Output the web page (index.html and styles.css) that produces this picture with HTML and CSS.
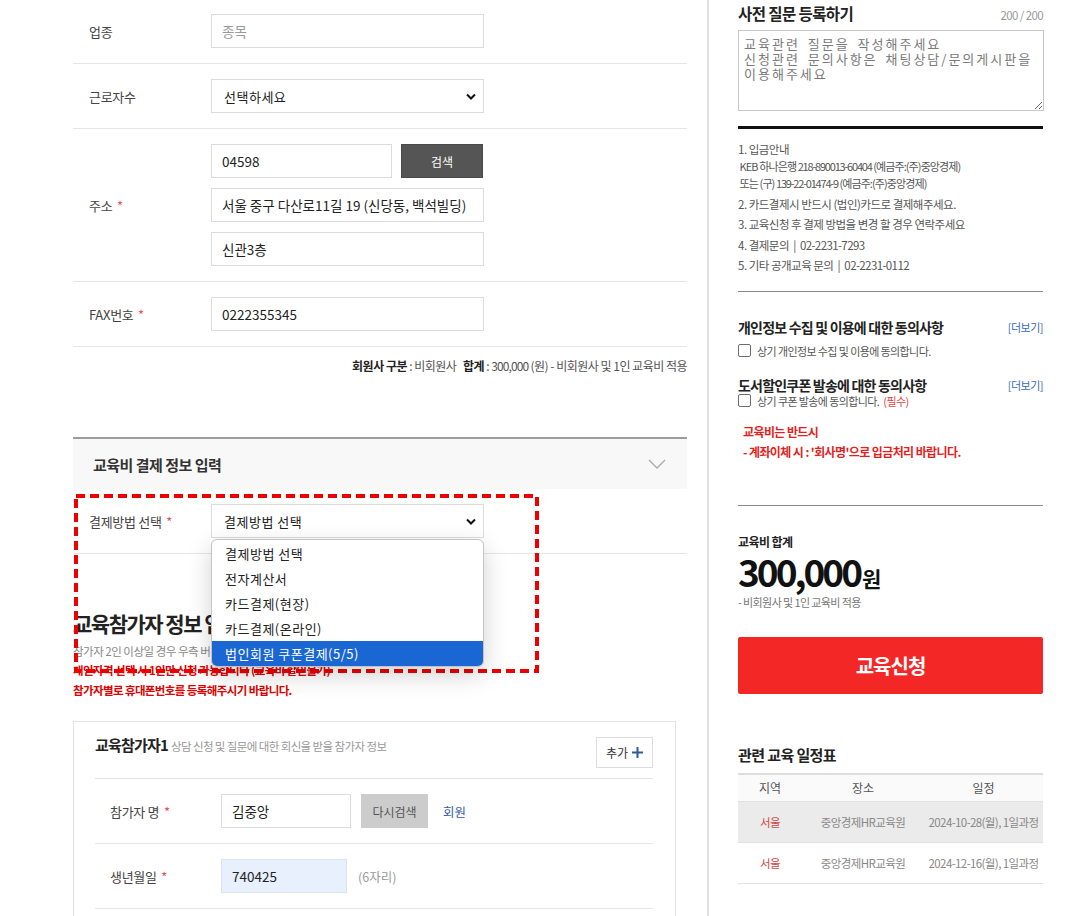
FILE: index.html
```html
<html>
<head>
  <meta charset="utf-8">
  <meta name="viewport" content="width=device-width, initial-scale=1.0">
<link rel="stylesheet" href="styles.css">
</head>
<body>

<div class="page">

  <!-- left: application form -->
  <div class="main">

    <div class="form-row">
      <span class="form-label">업종</span>
      <input type="text" class="inp" placeholder="종목">
    </div>

    <div class="form-row">
      <span class="form-label">근로자수</span>
      <div class="select-box">
        <select class="sel"><option>선택하세요</option></select>
        <svg class="sel-arrow" width="10" height="7" viewBox="0 0 10 7"><path d="M1 1.5 L5 5.5 L9 1.5" fill="none" stroke="#111" stroke-width="2"/></svg>
      </div>
    </div>

    <div class="form-row">
      <span class="form-label">주소 <em class="req">*</em></span>
      <div class="field-stack">
        <div class="zip-line">
          <input type="text" class="inp inp-zip" value="04598">
          <button class="btn-dark">검색</button>
        </div>
        <input type="text" class="inp" value="서울 중구 다산로11길 19 (신당동, 백석빌딩)">
        <input type="text" class="inp" value="신관3층">
      </div>
    </div>

    <div class="form-row">
      <span class="form-label">FAX번호 <em class="req">*</em></span>
      <input type="text" class="inp" value="0222355345">
    </div>

    <p class="sum-line"><b>회원사 구분</b> : 비회원사 &nbsp; <b>합계</b> : <span class="num">300,000</span> (원) - 비회원사 및 1인 교육비 적용</p>

    <div class="section-head">
      <span>교육비 결제 정보 입력</span>
      <svg width="18" height="10" viewBox="0 0 18 10"><path d="M1 1 L9 9 L17 1" fill="none" stroke="#aaa" stroke-width="1.3"/></svg>
    </div>

    <div class="pay-area">
      <div class="form-row">
        <span class="form-label">결제방법 선택 <em class="req">*</em></span>
        <div class="select-box">
          <select class="sel"><option>결제방법 선택</option></select>
          <svg class="sel-arrow" width="10" height="7" viewBox="0 0 10 7"><path d="M1 1.5 L5 5.5 L9 1.5" fill="none" stroke="#111" stroke-width="2"/></svg>
          <ul class="drop-list">
            <li>결제방법 선택</li>
            <li>전자계산서</li>
            <li>카드결제(현장)</li>
            <li>카드결제(온라인)</li>
            <li class="on">법인회원 쿠폰결제(5/5)</li>
          </ul>
        </div>
      </div>

      <h2 class="part-title">교육참가자 정보 입력</h2>
      <p class="part-note">참가자 2인 이상일 경우 우측 버튼을 클릭하여 추가해주세요.</p>
      <p class="part-warn">개인자격 선택 시 1인만 신청 가능합니다 (교육비 할인불가)</p>
      <p class="part-warn">참가자별로 휴대폰번호를 등록해주시기 바랍니다.</p>

      <svg class="dash-box" width="465" height="179" viewBox="0 0 465 179">
        <rect x="2" y="2" width="461" height="175" fill="none" stroke="#ee0000" stroke-width="4" stroke-dasharray="9 5"/>
      </svg>
    </div>

    <div class="card">
      <div class="card-head">
        <p><b>교육참가자1</b> <span>상담 신청 및 질문에 대한 회신을 받을 참가자 정보</span></p>
        <button class="btn-add">추가
          <svg width="11" height="11" viewBox="0 0 11 11"><path d="M5.5 0 V11 M0 5.5 H11" stroke="#2c5aa0" stroke-width="2"/></svg>
        </button>
      </div>
      <div class="form-row card-row">
        <span class="form-label">참가자 명 <em class="req">*</em></span>
        <input type="text" class="inp inp-name" value="김중앙">
        <button class="btn-gray">다시검색</button>
        <span class="member-link">회원</span>
      </div>
      <div class="form-row card-row">
        <span class="form-label">생년월일 <em class="req">*</em></span>
        <input type="text" class="inp inp-birth" value="740425">
        <span class="hint">(6자리)</span>
      </div>
    </div>

  </div>

  <!-- right: summary panel -->
  <div class="side">
    <div class="q-head">
      <h3>사전 질문 등록하기</h3>
      <span class="q-count">200 / 200</span>
    </div>
    <textarea class="q-text" placeholder="교육관련 질문을 작성해주세요&#10;신청관련 문의사항은 채팅상담/문의게시판을&#10;이용해주세요"></textarea>

    <ul class="info-list">
      <li>1. 입금안내<br>
        <span class="acct">&nbsp;KEB 하나은행 <span class="num">218-890013-60404</span> (예금주:(주)중앙경제)</span><br>
        <span class="acct">&nbsp;또는 (구) <span class="num">139-22-01474-9</span> (예금주:(주)중앙경제)</span></li>
      <li>2. 카드결제시 반드시 (법인)카드로 결제해주세요.</li>
      <li>3. 교육신청 후 결제 방법을 변경 할 경우 연락주세요</li>
      <li>4. 결제문의 &nbsp;|&nbsp; <span class="num">02-2231-7293</span></li>
      <li>5. 기타 공개교육 문의 &nbsp;|&nbsp; <span class="num">02-2231-0112</span></li>
    </ul>

    <div class="agree">
      <div class="agree-head">
        <h4>개인정보 수집 및 이용에 대한 동의사항</h4>
        <span class="more">[더보기]</span>
      </div>
      <label class="check-row"><input type="checkbox"> 상기 개인정보 수집 및 이용에 동의합니다.</label>

      <div class="agree-head second">
        <h4>도서할인쿠폰 발송에 대한 동의사항</h4>
        <span class="more">[더보기]</span>
      </div>
      <label class="check-row tight"><input type="checkbox"> 상기 쿠폰 발송에 동의합니다. <span class="red">(필수)</span></label>

      <p class="notice">교육비는 반드시<br>- 계좌이체 시 : '회사명'으로 입금처리 바랍니다.</p>
    </div>

    <div class="total">
      <p class="total-label">교육비 합계</p>
      <p class="total-price">300,000<small>원</small></p>
      <p class="total-note">- 비회원사 및 1인 교육비 적용</p>
      <button class="btn-apply">교육신청</button>
    </div>

    <h3 class="sch-title">관련 교육 일정표</h3>
    <table class="sch">
      <tr><th class="c1">지역</th><th class="c2">장소</th><th>일정</th></tr>
      <tr class="hl"><td class="area">서울</td><td>중앙경제HR교육원</td><td>2024-10-28(월), 1일과정</td></tr>
      <tr><td class="area">서울</td><td>중앙경제HR교육원</td><td>2024-12-16(월), 1일과정</td></tr>
    </table>
  </div>

</div>

</body>
</html>
```

FILE: styles.css
```css
html, body {
  margin: 0;
  overflow: hidden;
  background: #fff;
}
body {
  font-family: "Noto Sans CJK KR", "Noto Sans", sans-serif;
  font-size: 13px;
  color: #333;
}
p, h2, h3, h4, ul {
  margin: 0;
  padding: 0;
}
ul {
  list-style: none;
}

.page {
  display: flex;
  margin-top: -1px;
}

/* ---- left column ---- */
.main {
  width: 614px;
  margin-left: 73px;
}
.form-row {
  display: flex;
  align-items: center;
  padding: 15px 0;
  border-bottom: 1px solid #e6e6e6;
}
.form-label {
  width: 122px;
  padding-left: 16px;
  font-size: 13px;
  color: #444;
  letter-spacing: -0.3px;
  flex-shrink: 0;
}
.req {
  font-style: normal;
  color: #e05555;
  margin-left: 2px;
}
.inp {
  width: 273px;
  height: 34px;
  box-sizing: border-box;
  border: 1px solid #dcdcdc;
  padding: 0 10px;
  font-family: inherit;
  font-size: 13.5px;
  color: #222;
  outline: none;
}
.inp::placeholder {
  color: #999;
}
.field-stack {
  display: flex;
  flex-direction: column;
  gap: 10px;
}
.zip-line {
  display: flex;
}
.inp-zip {
  width: 181px;
}
.btn-dark {
  width: 82px;
  height: 34px;
  margin-left: 9px;
  background: #555;
  border: 1px solid #4a4a4a;
  color: #fff;
  font-family: inherit;
  font-size: 12px;
}

.select-box {
  position: relative;
  width: 273px;
}
.sel {
  appearance: none;
  width: 273px;
  height: 34px;
  border: 1px solid #dcdcdc;
  background: #fff;
  padding: 0 12px;
  font-family: inherit;
  font-size: 13px;
  color: #222;
  letter-spacing: 0.5px;
}
.sel-arrow {
  position: absolute;
  right: 8px;
  top: 14px;
}

.sum-line {
  margin: 10px 0 62px;
  text-align: right;
  font-size: 12px;
  line-height: 18px;
  color: #555;
  letter-spacing: -0.5px;
}
.sum-line b {
  color: #222;
}
.num {
  letter-spacing: -0.9px;
}

.section-head {
  display: flex;
  justify-content: space-between;
  align-items: center;
  height: 50px;
  padding: 0 21px 0 20px;
  border-top: 2px solid #9c9c9c;
  background: #f8f8f8;
  font-size: 15px;
  font-weight: bold;
  color: #333;
  letter-spacing: -0.5px;
}

.pay-area {
  position: relative;
}
.drop-list {
  position: absolute;
  left: 0;
  top: 35px;
  width: 273px;
  box-sizing: border-box;
  padding-top: 1px;
  background: #fff;
  border: 1px solid #c4c4c4;
  border-radius: 6px;
  overflow: hidden;
  box-shadow: 0 8px 24px rgba(0, 0, 0, 0.18);
  z-index: 3;
}
.drop-list li {
  height: 25px;
  line-height: 25px;
  padding-left: 13px;
  font-size: 13px;
  color: #222;
  letter-spacing: 0.5px;
}
.drop-list li.on {
  background: #1a66d2;
  color: #fff;
}
.dash-box {
  position: absolute;
  left: 1px;
  top: 5px;
  z-index: 2;
}

.part-title {
  margin-top: 55px;
  font-size: 21px;
  line-height: 28px;
  font-weight: bold;
  color: #222;
  letter-spacing: -1.5px;
}
.part-note {
  margin-top: 5px;
  font-size: 11.5px;
  line-height: 18px;
  color: #888;
  letter-spacing: -0.5px;
}
.part-warn {
  font-size: 11.5px;
  line-height: 20px;
  font-weight: bold;
  color: #e00000;
  letter-spacing: -0.6px;
}

.card {
  margin-top: 21px;
  width: 603px;
  min-height: 200px;
  box-sizing: border-box;
  border: 1px solid #e2e2e2;
  padding: 0 22px 0 21px;
}
.card-head {
  display: flex;
  justify-content: space-between;
  align-items: flex-start;
  padding: 15px 0 10px;
  border-bottom: 1px solid #e2e2e2;
}
.card-head p {
  margin-top: -3px;
  line-height: 22px;
}
.card-head b {
  font-size: 15px;
  color: #222;
  letter-spacing: -0.8px;
}
.card-head span {
  font-size: 11.5px;
  color: #999;
  letter-spacing: -0.6px;
}
.btn-add {
  display: flex;
  align-items: center;
  gap: 4px;
  width: 57px;
  height: 31px;
  justify-content: center;
  background: #fff;
  border: 1px solid #ddd;
  font-family: inherit;
  font-size: 12px;
  color: #333;
}
.card-row .form-label {
  width: 111px;
  padding-left: 15px;
}
.inp-name {
  width: 130px;
}
.btn-gray {
  width: 67px;
  height: 34px;
  margin-left: 10px;
  background: #ccc;
  border: none;
  color: #555;
  font-family: inherit;
  font-size: 12px;
}
.member-link {
  margin-left: 15px;
  color: #3560a8;
  font-size: 12.5px;
}
.inp-birth {
  width: 126px;
  background: #e8f0fe;
  border-color: #dde4ee;
}
.hint {
  margin-left: 11px;
  color: #999;
  font-size: 12.5px;
}

/* ---- right column ---- */
.side {
  width: 305px;
  min-height: 930px;
  margin-left: 20px;
  padding-left: 29px;
  border-left: 2px solid #e0e0e0;
}
.q-head {
  display: flex;
  justify-content: space-between;
  align-items: baseline;
  padding-top: 2px;
}
.q-head h3 {
  font-size: 15.5px;
  line-height: 24px;
  color: #222;
  letter-spacing: -0.6px;
}
.q-count {
  font-size: 11.5px;
  color: #999;
  letter-spacing: -0.6px;
}
.q-text {
  display: block;
  width: 306px;
  height: 81px;
  margin-top: 5px;
  box-sizing: border-box;
  border: 1px solid #c8c8c8;
  padding: 5px 5px;
  font-family: inherit;
  font-size: 13px;
  line-height: 15px;
  letter-spacing: 2px;
  word-spacing: 3px;
}
.q-text::placeholder {
  color: #7a7a7a;
}
.info-list {
  margin-top: 15px;
  border-top: 3px solid #111;
  padding-top: 12px;
  padding-bottom: 13px;
  border-bottom: 1px solid #8a8a8a;
}
.info-list li {
  font-size: 11.5px;
  line-height: 17px;
  color: #555;
  letter-spacing: -0.5px;
  margin-bottom: 3.5px;
}
.info-list .num {
  letter-spacing: -0.6px;
}
.info-list .acct {
  font-size: 11px;
  letter-spacing: -0.9px;
}
.info-list .acct .num {
  letter-spacing: -1.2px;
}

.agree {
  padding-top: 1px;
}
.agree-head {
  display: flex;
  justify-content: space-between;
  align-items: center;
  margin-top: 24px;
}
.agree-head.second {
  margin-top: 16px;
}
.agree-head h4 {
  font-size: 14px;
  line-height: 20px;
  color: #222;
  letter-spacing: -0.8px;
}
.more {
  font-size: 11px;
  color: #3b6cb5;
  letter-spacing: -0.5px;
}
.check-row {
  display: flex;
  align-items: center;
  gap: 4px;
  margin-top: 6px;
  font-size: 11px;
  line-height: 16px;
  color: #555;
  letter-spacing: -0.6px;
}
.check-row.tight {
  margin-top: -2px;
}
.check-row input {
  appearance: none;
  width: 13px;
  height: 13px;
  margin: 0 2px 0 0;
  border: 1px solid #6e6e6e;
  border-radius: 2px;
  background: #fff;
}
.red {
  color: #e04444;
}
.notice {
  margin-top: 13px;
  padding-left: 5px;
  font-size: 12px;
  line-height: 20px;
  font-weight: bold;
  color: #e51d1d;
  letter-spacing: -0.6px;
}

.total {
  margin-top: 43px;
  border-top: 1px solid #8a8a8a;
  padding-top: 27px;
}
.total-label {
  font-size: 12px;
  line-height: 18px;
  font-weight: bold;
  color: #222;
  letter-spacing: -0.6px;
}
.total-price {
  font-size: 37px;
  line-height: 40px;
  font-weight: bold;
  color: #111;
  letter-spacing: -3px;
}
.total-price small {
  font-size: 21px;
  line-height: 1;
  letter-spacing: 0;
  margin-left: 2px;
}
.total-note {
  margin-top: 3px;
  font-size: 11px;
  line-height: 16px;
  color: #777;
  letter-spacing: -0.6px;
}
.btn-apply {
  display: block;
  width: 305px;
  height: 57px;
  margin-top: 27px;
  border: none;
  border-radius: 2px;
  background: #f42727;
  color: #fff;
  font-family: inherit;
  font-size: 20px;
  font-weight: bold;
  letter-spacing: -1px;
}

.sch-title {
  margin-top: 50px;
  font-size: 15px;
  line-height: 22px;
  color: #222;
  letter-spacing: -0.6px;
}
.sch {
  width: 305px;
  margin-top: 7px;
  border-collapse: collapse;
  border-top: 2px solid #ddd;
}
.sch th {
  height: 28px;
  font-weight: normal;
  font-size: 12px;
  color: #555;
  background: #fafafa;
}
.sch .c1 {
  width: 62px;
}
.sch .c2 {
  width: 120px;
}
.sch td {
  height: 41px;
  text-align: center;
  font-size: 11.5px;
  color: #888;
  letter-spacing: -0.6px;
  border-top: 1px solid #e0e0e0;
  border-bottom: 1px solid #e0e0e0;
  white-space: nowrap;
}
.sch tr.hl td {
  background: #ebebeb;
}
.sch td.area {
  color: #d64545;
}
```
